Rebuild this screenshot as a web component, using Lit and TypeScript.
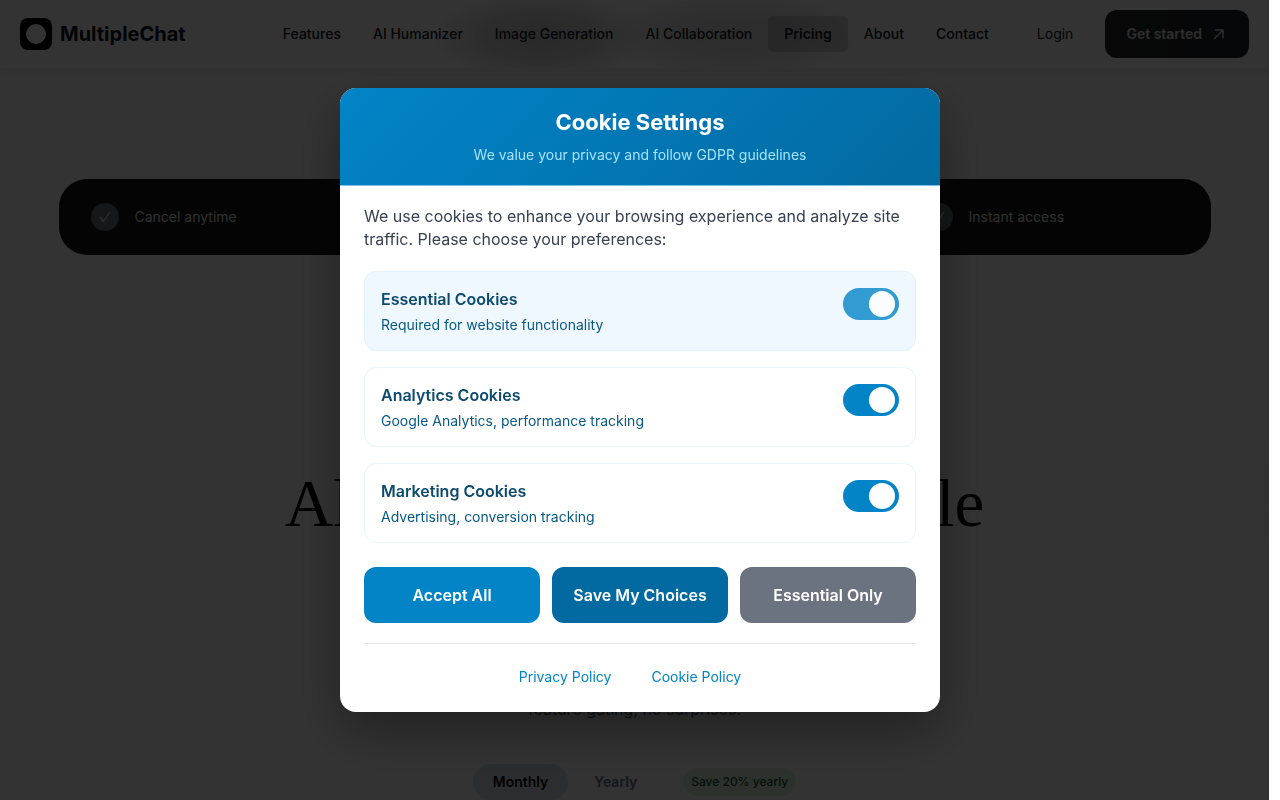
import { LitElement, html, css } from "lit";
import { customElement, state } from "lit/decorators.js";

interface Category {
  id: string;
  title: string;
  text: string;
  locked?: boolean;
}

const CATEGORIES: Category[] = [
  { id: "essential", title: "Essential Cookies", text: "Required for website functionality", locked: true },
  { id: "analytics", title: "Analytics Cookies", text: "Google Analytics, performance tracking" },
  { id: "marketing", title: "Marketing Cookies", text: "Advertising, conversion tracking" },
];

@customElement("site-header")
class SiteHeader extends LitElement {
  static styles = css`
    :host {
      display: flex;
      align-items: center;
      gap: 16px;
      height: 68px;
      padding: 0 20px;
      box-shadow: 0 4px 8px rgba(0, 0, 0, 0.06);
      background:
        radial-gradient(110px 44px at 540px 36px, rgba(0, 0, 0, 0.2), rgba(0, 0, 0, 0.14) 50%, transparent),
        radial-gradient(130px 44px at 735px 34px, rgba(0, 0, 0, 0.14), rgba(0, 0, 0, 0.1) 50%, transparent),
        #ffffff;
      color: #111827;
    }
    a {
      color: inherit;
      text-decoration: none;
    }
    .brand {
      display: flex;
      align-items: center;
      gap: 8px;
      font-size: 20px;
      line-height: 28px;
      font-weight: 700;
    }
    .brand svg {
      width: 32px;
      height: 32px;
    }
    nav {
      display: flex;
      margin-left: auto;
    }
    .link {
      padding: 8px 16px;
      border-radius: 6px;
      font-size: 14px;
      line-height: 20px;
      font-weight: 500;
      white-space: nowrap;
    }
    .active {
      background: rgba(0, 0, 0, 0.14);
      font-weight: 600;
    }
    .login {
      font-weight: 400;
    }
    .cta {
      display: flex;
      align-items: center;
      gap: 10px;
      height: 48px;
      padding: 0 23px 0 21px;
      border: 0;
      border-radius: 12px;
      background: linear-gradient(90deg, #2b2b2b, #1c2329);
      color: #e0e2e5;
      font: 600 14px/20px Inter, sans-serif;
      white-space: nowrap;
    }
    .cta svg {
      width: 14px;
      height: 14px;
    }
  `;

  render() {
    const links = ["Features", "AI Humanizer", "Image Generation", "AI Collaboration", "Pricing", "About", "Contact"];
    return html`
      <a class="brand" href="#">
        <svg viewBox="0 0 32 32" aria-hidden="true">
          <rect width="32" height="32" rx="8" fill="#000" />
          <circle cx="16" cy="16" r="10" fill="#fff" />
        </svg>
        MultipleChat
      </a>
      <nav>
        ${links.map((l) => html`<a class="link ${l === "Pricing" ? "active" : ""}" href="#">${l}</a>`)}
      </nav>
      <a class="link login" href="#">Login</a>
      <button class="cta" type="button">
        Get started
        <svg viewBox="0 0 14 14" fill="none" stroke="currentColor" stroke-width="1.5" stroke-linecap="round" stroke-linejoin="round" aria-hidden="true">
          <path d="M2.5 11.5 11 3M3.5 3h7.5v7.5" />
        </svg>
      </button>
    `;
  }
}

@customElement("cookie-dialog")
class CookieDialog extends LitElement {
  @state() private enabled: Record<string, boolean> = { essential: true, analytics: true, marketing: true };

  static styles = css`
    :host {
      display: block;
      width: min(600px, 100% - 32px);
      border-radius: 16px;
      overflow: hidden;
      background: #ffffff;
      box-shadow: 0 20px 50px rgba(0, 0, 0, 0.35);
    }
    header {
      padding: 20px 24px;
      border-bottom: 1px solid #7cc4ea;
      background: linear-gradient(135deg, #0284c7, #0369a1);
      text-align: center;
    }
    h2 {
      margin: 0 0 8px;
      color: #ffffff;
      font-size: 22px;
      line-height: 28px;
      font-weight: 700;
    }
    .tagline {
      margin: 0;
      color: #a5e3fa;
      font-size: 14px;
      line-height: 21px;
    }
    .body {
      padding: 19px 24px 24px;
    }
    .intro {
      margin: 0 0 20px;
      color: #374151;
      font-size: 16px;
      line-height: 23px;
    }
    .list {
      display: grid;
      gap: 16px;
      margin-bottom: 24px;
    }
    .option {
      display: flex;
      align-items: flex-start;
      justify-content: space-between;
      gap: 16px;
      padding: 16px;
      border: 1px solid #e8f5fc;
      border-radius: 12px;
    }
    .locked {
      background: #f0f8ff;
      border-color: #e0f2fe;
    }
    .copy {
      display: grid;
      gap: 6px;
    }
    .name {
      color: #0c4a6e;
      font-size: 16px;
      line-height: 22px;
      font-weight: 600;
    }
    .detail {
      color: #075985;
      font-size: 14px;
      line-height: 18px;
    }
    input {
      appearance: none;
      flex: none;
      display: flex;
      width: 56px;
      height: 32px;
      margin: 0;
      padding: 3px;
      box-sizing: border-box;
      border-radius: 16px;
      background: #9ca3af;
    }
    input::before {
      content: "";
      width: 26px;
      height: 26px;
      border-radius: 50%;
      background: #ffffff;
    }
    input:checked {
      justify-content: flex-end;
      padding-right: 4px;
      background: #0284c7;
    }
    input:disabled {
      opacity: 0.8;
    }
    .actions {
      display: grid;
      grid-template-columns: repeat(3, 1fr);
      gap: 12px;
      margin-bottom: 20px;
    }
    button {
      height: 56px;
      padding: 0;
      border: 0;
      border-radius: 12px;
      color: #ffffff;
      font: 600 16px/24px Inter, sans-serif;
    }
    .accept {
      background: #0284c7;
    }
    .save {
      background: #0369a1;
    }
    .only {
      background: #6b7280;
    }
    footer {
      display: flex;
      justify-content: center;
      gap: 20px;
      padding-top: 22px;
      border-top: 1px solid #e5e7eb;
    }
    footer a {
      margin-right: 20px;
      color: #0284c7;
      font-size: 14px;
      line-height: 22px;
      text-decoration: none;
    }
  `;

  private toggle(id: string, e: Event) {
    this.enabled = { ...this.enabled, [id]: (e.target as HTMLInputElement).checked };
  }

  render() {
    return html`
      <header>
        <h2>Cookie Settings</h2>
        <p class="tagline">We value your privacy and follow GDPR guidelines</p>
      </header>
      <div class="body">
        <p class="intro">
          We use cookies to enhance your browsing experience and analyze site traffic. Please choose your preferences:
        </p>
        <div class="list">
          ${CATEGORIES.map(
            (c) => html`
              <label class="option ${c.locked ? "locked" : ""}" for=${c.id}>
                <span class="copy">
                  <span class="name">${c.title}</span>
                  <span class="detail">${c.text}</span>
                </span>
                <input
                  id=${c.id}
                  type="checkbox"
                  role="switch"
                  .checked=${this.enabled[c.id]}
                  ?disabled=${c.locked}
                  @change=${(e: Event) => this.toggle(c.id, e)}
                />
              </label>
            `
          )}
        </div>
        <div class="actions">
          <button class="accept" type="button">Accept All</button>
          <button class="save" type="button">Save My Choices</button>
          <button class="only" type="button">Essential Only</button>
        </div>
        <footer>
          <a href="#">Privacy Policy</a>
          <a href="#">Cookie Policy</a>
        </footer>
      </div>
    `;
  }
}

@customElement("app-root")
class AppRoot extends LitElement {
  static styles = css`
    :host {
      display: block;
      height: 100vh;
      overflow: hidden;
      background: #ffffff;
      font-family: Inter, sans-serif;
    }
    .page {
      height: 100%;
      margin-right: 11px;
      overflow: hidden;
      background: radial-gradient(180px 220px at 90% 62%, #f7f7f7, transparent), #fdfdfd;
    }
    .perks {
      display: grid;
      grid-template-columns: repeat(4, 1fr);
      gap: 24px;
      max-width: 1088px;
      margin: 111px auto 0;
      padding: 24px 32px;
      border-radius: 28px;
      background: #171717;
      list-style: none;
    }
    .perk {
      display: flex;
      align-items: center;
      gap: 16px;
      color: #e5e7eb;
      font-size: 14px;
      line-height: 20px;
    }
    .perk svg {
      width: 28px;
      height: 28px;
    }
    .hero {
      display: flex;
      flex-direction: column;
      align-items: center;
      padding-top: 206px;
      text-align: center;
    }
    h1 {
      margin: 0;
      color: #0a0a0a;
      font: 400 67px/84px "Liberation Serif", serif;
      white-space: nowrap;
    }
    .lead {
      max-width: 560px;
      margin: 150px 0 41px;
      color: #4b5563;
      font-size: 16px;
      line-height: 28px;
    }
    .billing {
      display: flex;
      align-items: center;
      gap: 6px;
    }
    .period {
      height: 36px;
      padding: 0 20px;
      border: 0;
      border-radius: 18px;
      background: transparent;
      color: #6b7280;
      font: 600 14px/20px Inter, sans-serif;
    }
    .current {
      background: #dbe1e6;
      color: #0a0a0a;
    }
    .saving {
      margin-left: 20px;
      padding: 6px 8px;
      border-radius: 14px;
      background: #e2f3e6;
      color: #14532d;
      font-size: 12px;
      line-height: 16px;
      font-weight: 500;
    }
    .shade {
      position: fixed;
      inset: 0 11px 0 0;
      background: rgba(0, 0, 0, 0.8);
    }
    .layer {
      position: fixed;
      inset: 0;
      display: flex;
      align-items: center;
      justify-content: center;
      clip-path: inset(0 11px 0 0);
    }
  `;

  render() {
    const perks = ["Cancel anytime", "No hidden fees", "Secure payment", "Instant access"];
    return html`
      <div class="page">
        <site-header></site-header>
        <ul class="perks">
          ${perks.map(
            (p) => html`<li class="perk">
              <svg viewBox="0 0 28 28" aria-hidden="true">
                <circle cx="14" cy="14" r="14" fill="#6b7277" />
                <path d="M9.5 14.5 12.5 18.5 18.5 9.5" fill="none" stroke="#e5e7eb" stroke-width="1.3" stroke-linecap="round" stroke-linejoin="round" />
              </svg>
              ${p}
            </li>`
          )}
        </ul>
        <section class="hero">
          <h1>All models for one simple</h1>
          <p class="lead">feature gating, no surprises.</p>
          <div class="billing">
            <button class="period current" type="button">Monthly</button>
            <button class="period" type="button">Yearly</button>
            <span class="saving">Save 20% yearly</span>
          </div>
        </section>
      </div>
      <div class="shade"></div>
      <div class="layer">
        <cookie-dialog role="dialog" aria-label="Cookie Settings"></cookie-dialog>
      </div>
    `;
  }
}
